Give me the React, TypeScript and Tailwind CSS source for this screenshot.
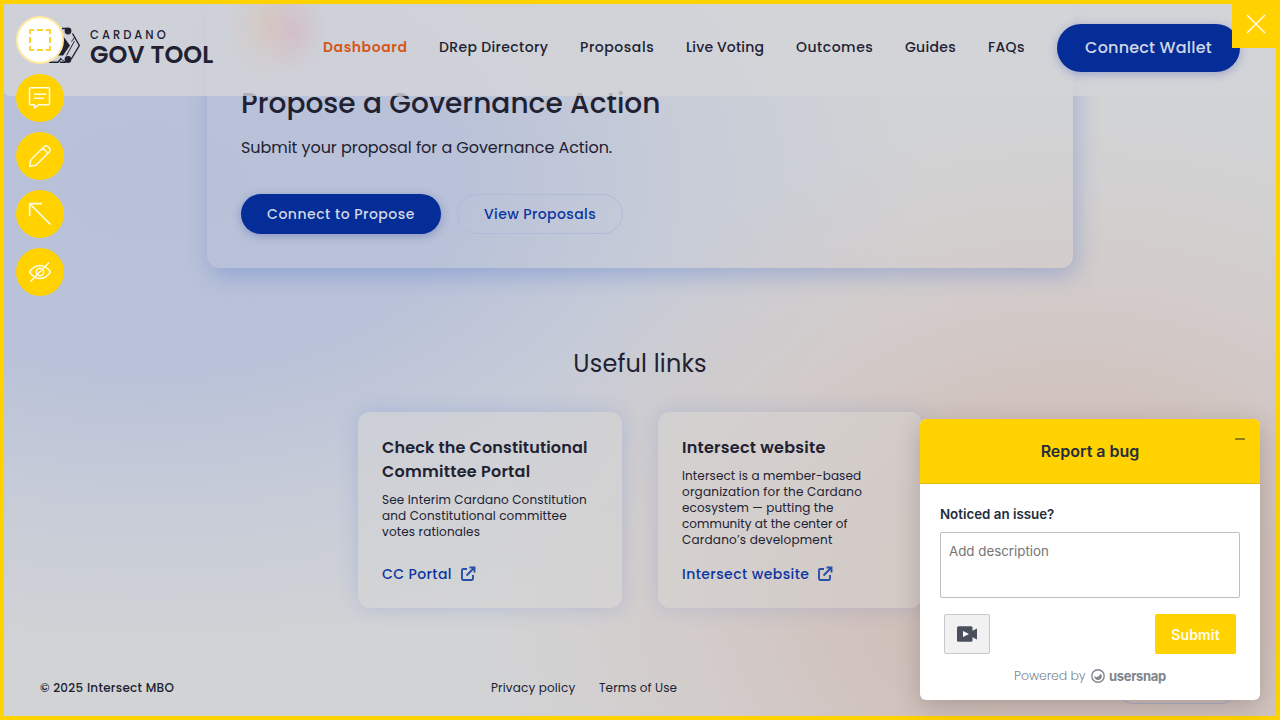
import React from "react";

const page =
  "bg-[radial-gradient(ellipse_580px_470px_at_1070px_590px,#cfbcb5_0%,rgba(208,191,185,0.9)_35%,rgba(211,199,195,0.6)_65%,rgba(209,205,201,0)_100%),radial-gradient(ellipse_780px_480px_at_150px_180px,#b9c1d8_0%,#b9c2d8_40%,rgba(196,202,216,0.8)_68%,rgba(209,211,215,0)_100%)] bg-[#d2d3d5]";

const nav = [
  { label: "Dashboard", cls: "w-[84px] tracking-[0.55px] font-semibold text-[#d4581b]" },
  { label: "DRep Directory", cls: "w-[109px] tracking-[0.35px] font-medium" },
  { label: "Proposals", cls: "w-[74px] tracking-[0.55px] font-medium" },
  { label: "Live Voting", cls: "w-[78px] tracking-[0.15px] font-medium" },
  { label: "Outcomes", cls: "w-[77px] tracking-[0.5px] font-medium" },
  { label: "Guides", cls: "w-[51px] tracking-[0.3px] font-medium" },
  { label: "FAQs", cls: "w-[37px] tracking-[0.3px] font-medium" },
];

function Logo() {
  return (
    <div className="flex h-[44px] items-start">
      <svg className="h-[38px] w-[40px]" viewBox="40 26 40 38" fill="none" stroke="#212132">
        <path d="M49 62.300h9l3-3.500M60 62.300h6M62 28.500h5M72.500 33.500l6.800 12-8 13.500" strokeWidth="1.400" />
        <path d="M60 58l5 4M74.500 37.500l-3 4M74.500 41l-8 14.500" strokeWidth="1" />
        <path d="M58 36h5l7 9.500-7 10h-5z" fill="#212132" stroke="none" />
        <circle cx="68" cy="31" r="3.400" fill="#212132" stroke="none" />
        <circle cx="68" cy="59.500" r="3.400" fill="#212132" stroke="none" />
      </svg>
      <div className="ml-[10px] flex w-[126px] flex-col whitespace-nowrap">
        <span className="mt-[2px] h-[15px] text-[11.500px] leading-[14px] font-medium tracking-[3px]">CARDANO</span>
        <span className="text-[24px] leading-[24px] font-semibold tracking-[0.1px]">GOV TOOL</span>
      </div>
    </div>
  );
}

function External() {
  return (
    <svg className="h-4 w-4" viewBox="0 0 16 16" fill="none" stroke="#2850a8" strokeWidth="1.900">
      <path d="M7 3H3.200Q2 3 2 4.200v8.600Q2 14 3.200 14h8.600q1.200 0 1.200-1.200V9M6.500 9.500L14 2M9.500 1.500h5v5" />
    </svg>
  );
}

function Tool({ top, children }: { top?: boolean; children: React.ReactNode }) {
  return (
    <div
      className={
        top
          ? "flex h-12 w-12 items-center justify-center rounded-full border-2 border-[#ffeba0] bg-white"
          : "flex h-12 w-12 items-center justify-center rounded-full bg-[#ffd200]"
      }
    >
      <svg className="h-6 w-6 shrink-0" viewBox="0 0 24 24" fill="none" stroke={top ? "#fcd535" : "#fffbe6"} strokeWidth={top ? 2 : 1.5} strokeLinejoin="round">
        {children}
      </svg>
    </div>
  );
}

function BugWidget() {
  return (
    <div className="absolute top-[419px] left-[920px] flex h-[281px] w-[340px] flex-col overflow-hidden rounded-md bg-white font-['Inter',sans-serif] text-[#242d3c] shadow-[0_6px_24px_rgba(60,40,40,0.24)]">
      <div className="relative flex h-[65px] shrink-0 items-center justify-center border-b border-[#e3bd0c] bg-[#ffd200] text-[16px] font-semibold">
        <span>Report a bug</span>
        <span className="absolute top-[19px] right-[15px] h-[2px] w-[10px] bg-[#927d1a]" />
      </div>
      <div className="flex flex-col px-5 pt-5">
        <span className="h-[20px] text-[13.333px] leading-[20px] font-semibold">Noticed an issue?</span>
        <div className="mt-2 h-[66px] rounded-[2px] border border-[#bcbec1] px-2 pt-[8px] text-[13.333px] leading-[20px] text-[#757575]">Add description</div>
        <div className="mt-4 flex justify-between px-1">
          <div className="flex h-10 w-[46px] items-center justify-center rounded-[2px] border border-[#c6c8cb] bg-[#f1f1f1]">
            <svg className="h-4 w-5" viewBox="0 0 20 16">
              <rect x="0" y="0.300" width="15.500" height="15.400" rx="1.500" fill="#49505c" />
              <path d="M15 5l5-2.500v11L15 11z" fill="#49505c" />
              <path d="M6 5l6 3-6 3z" fill="#fff" />
            </svg>
          </div>
          <div className="flex h-10 w-[81px] items-center justify-center rounded-[2px] bg-[#ffd200] pt-px text-[14px] font-semibold tracking-[0.15px] text-[#fffdf0]">Submit</div>
        </div>
        <div className="mt-3 flex h-5 items-center pl-[74px] text-[#7c858e]">
          <span className="w-[77px] font-['Poppins','Inter',sans-serif] text-[12.500px] font-light tracking-[-0.1px] whitespace-nowrap">Powered by</span>
          <svg className="h-[14px] w-[14px]" viewBox="0 0 14 14">
            <circle cx="7" cy="7" r="6.200" fill="none" stroke="#7c858e" strokeWidth="1.400" />
            <path d="M3 7.300q2 1.200 4 .5 1.500-1 2.600-3.300 2 2.500.9 4.600Q9.300 11 7 11 4 11 3 7.300z" fill="#7c858e" />
          </svg>
          <span className="ml-1 text-[13px] leading-[18px] font-bold tracking-[-0.330px]">usersnap</span>
        </div>
      </div>
    </div>
  );
}

export default function App() {
  return (
    <div className={`relative h-[720px] w-[1280px] overflow-hidden font-['Poppins','Inter',sans-serif] text-[#212132] ${page}`}>
      <main className="flex h-full flex-col">
        <section className="mx-auto flex h-[268px] w-[866px] shrink-0 flex-col rounded-b-xl pl-[34px] shadow-[4px_8px_22px_rgba(47,92,200,0.28)]">
          <h1 className="mt-[83px] text-[28px] leading-[42px] font-medium tracking-[0.040px] whitespace-nowrap">Propose a Governance Action</h1>
          <p className="mt-[11px] text-[16px] leading-6 tracking-[-0.060px]">Submit your proposal for a Governance Action.</p>
          <div className="mt-[34px] flex gap-4 text-[14px] font-medium">
            <div className="flex h-10 w-[200px] items-center justify-center rounded-full bg-[#052d97] tracking-[0.5px] text-[#d2d7e5] shadow-[0_2px_10px_rgba(30,50,160,0.32)]">Connect to Propose</div>
            <div className="flex h-10 w-[166px] items-center justify-center rounded-full border border-[#aebcda] tracking-[0.4px] text-[#0b35a0]">View Proposals</div>
          </div>
        </section>
        <h2 className="mt-[78px] h-9 text-center text-[24px] leading-9 font-normal tracking-[0.180px]">Useful links</h2>
        <section className="mt-[30px] flex h-[196px] shrink-0 justify-center gap-9">
          <article className="flex w-[264px] flex-col rounded-xl bg-[#d6d6d5]/55 px-6 pt-6 pb-[22px] shadow-[0_0_20px_rgba(47,92,210,0.18)]">
            <h3 className="text-[16px] leading-6 font-semibold tracking-[0.15px] whitespace-nowrap">Check the Constitutional<br /><span className="tracking-[0.25px]">Committee Portal</span></h3>
            <p className="mt-2 text-[12px] leading-4 tracking-[0.150px] whitespace-nowrap">See Interim Cardano Constitution<br />and Constitutional committee<br />votes rationales</p>
            <div className="mt-auto flex h-6 items-center gap-2 text-[14px] font-medium text-[#0b35a0]"><span className="w-[70px] tracking-[0.4px] whitespace-nowrap">CC Portal</span><External /></div>
          </article>
          <article className="flex w-[264px] flex-col rounded-xl bg-[#d6d3d1]/50 px-6 pt-6 pb-[22px] shadow-[0_0_20px_rgba(47,92,210,0.17)]">
            <h3 className="text-[16px] leading-6 font-semibold tracking-[0.25px]">Intersect website</h3>
            <p className="mt-2 text-[12px] leading-4 tracking-[0.120px] whitespace-nowrap">Intersect is a member-based<br /><span className="tracking-[0.220px]">organization for the Cardano</span><br />ecosystem — putting the<br /><span className="tracking-[0.050px]">community at the center of</span><br /><span className="tracking-[0.220px]">Cardano’s development</span></p>
            <div className="mt-auto flex h-6 items-center gap-2 text-[14px] font-medium text-[#0b35a0]"><span className="w-[127px] tracking-[0.430px] whitespace-nowrap">Intersect website</span><External /></div>
          </article>
        </section>
        <footer className="mt-[70px] flex h-5 items-center pl-10 text-[12px] whitespace-nowrap">
          <span className="w-[451px] font-medium tracking-[0.280px]">© 2025 Intersect MBO</span>
          <span className="w-[108px] tracking-[0.150px]">Privacy policy</span>
          <span className="tracking-[0.1px]">Terms of Use</span>
        </footer>
      </main>
      <div className="absolute top-[664px] left-[1114px] h-10 w-[126px] rounded-full border border-[#a9aec8]" />
      <header className="absolute inset-x-0 top-0 flex h-24 items-center rounded-b-xl bg-[radial-gradient(ellipse_36px_46px_at_293px_30px,rgba(210,180,198,0.6)_0%,rgba(210,188,200,0.35)_50%,rgba(208,200,212,0)_100%),radial-gradient(ellipse_46px_56px_at_270px_24px,rgba(216,196,182,0.75)_0%,rgba(213,200,192,0.5)_45%,rgba(208,205,212,0)_100%)] bg-[#d3d5d8]/80 pl-10">
        <Logo />
        <nav className="ml-[107px] flex gap-8 pb-[2px] text-[14px]">
          {nav.map((n) => (
            <span key={n.label} className={`whitespace-nowrap ${n.cls}`}>{n.label}</span>
          ))}
        </nav>
        <div className="ml-8 flex h-12 w-[183px] items-center justify-center rounded-full bg-[#052d97] text-[16px] font-medium tracking-[0.2px] text-[#d2d7e5] shadow-[0_2px_10px_rgba(30,50,160,0.3)]">Connect Wallet</div>
      </header>
      <div className="pointer-events-none absolute inset-0 border-4 border-[#ffd200]" />
      <div className="absolute top-4 left-4 flex flex-col gap-[10px]">
        <Tool top><path d="M2 6V2h4M9 2h6M18 2h4v4M22 9v6M22 18v4h-4M15 22H9M6 22H2v-4M2 15V9" /></Tool>
        <Tool><path d="M2.500 1.700h18q1 0 1 1v15q0 1-1 1H11L6.500 22v-3.300h-4q-1 0-1-1v-15q0-1 1-1zM6 8.300h12.500M6 12.300h10" /></Tool>
        <Tool><path d="M1.700 22.300l1-6.300L16.500 2.300q1.500-1.200 3 0l2.200 2.200q1.200 1.500 0 3L8 21.300zM14.800 4l5.200 5.200" /></Tool>
        <Tool><path d="M1.700 14V1.700H14M1.700 1.700L22.500 22.500" strokeWidth="1.700" /></Tool>
        <Tool><path d="M1.500 12Q6 5.500 12 5.500T22.500 12Q18 18.500 12 18.500T1.500 12zM21 2.500L2.500 21.500" /><circle cx="12" cy="12" r="3.700" /></Tool>
      </div>
      <div className="absolute top-0 right-0 flex h-12 w-12 items-center justify-center bg-[#ffd200]">
        <svg className="h-5 w-5" viewBox="0 0 20 20" stroke="#fffbe6" strokeWidth="1.500"><path d="M1 1l18 18M19 1L1 19" /></svg>
      </div>
      <BugWidget />
    </div>
  );
}
